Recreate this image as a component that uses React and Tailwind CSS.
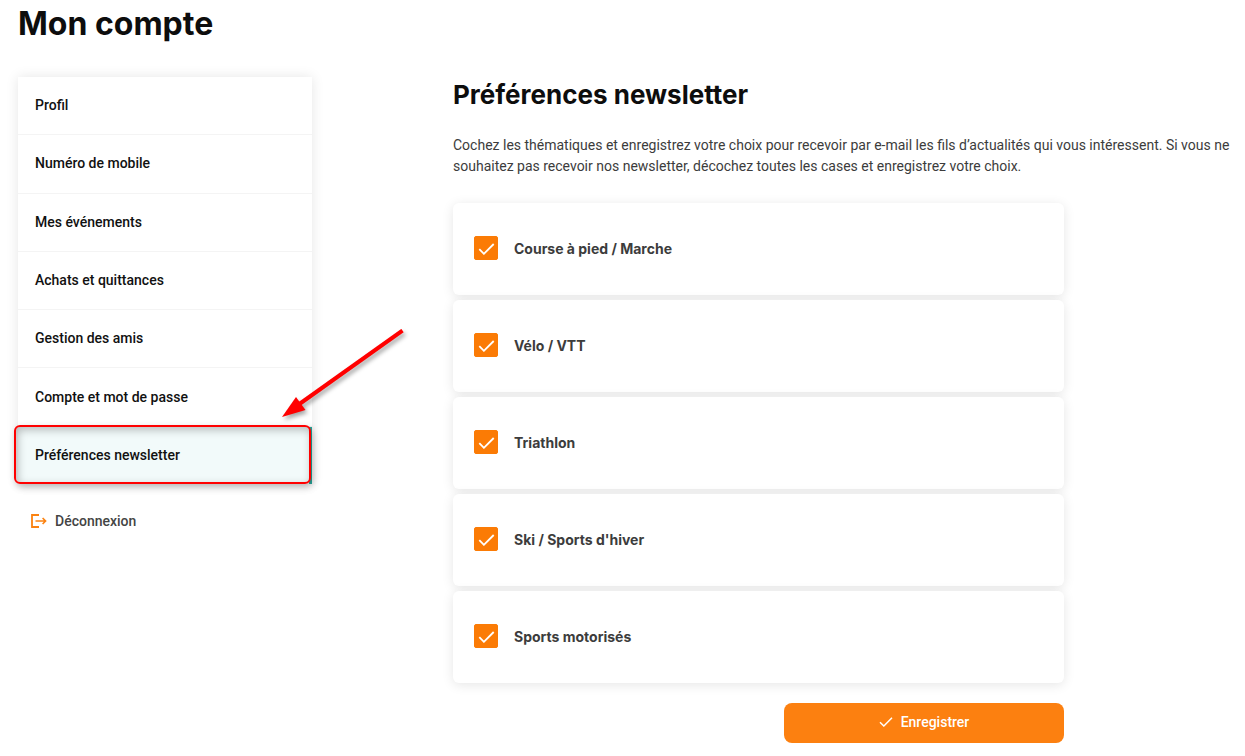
import React, { useState } from 'react';

const menuItems = [
  'Profil',
  'Numéro de mobile',
  'Mes événements',
  'Achats et quittances',
  'Gestion des amis',
  'Compte et mot de passe',
  'Préférences newsletter'
];

const topics = [
  { id: 'course', label: 'Course à pied / Marche' },
  { id: 'velo', label: 'Vélo / VTT' },
  { id: 'triathlon', label: 'Triathlon' },
  { id: 'ski', label: "Ski / Sports d'hiver" },
  { id: 'motorises', label: 'Sports motorisés' }
];

const CheckIcon = ({ className }) => (
  <svg viewBox="0 0 16 12" fill="none" stroke="currentColor" className={className} aria-hidden="true">
    <path d="M0.8 6.2 L5.4 10.8 L15.2 1" strokeWidth="1.8" />
  </svg>
);

const LogoutIcon = () => (
  <svg viewBox="0 0 16 14" fill="none" stroke="#fb8210" className="h-[14px] w-4" aria-hidden="true">
    <path d="M8 1 H1 V13 H8" strokeWidth="1.8" />
    <path d="M4.5 7 H14.5 M11.6 4 L14.6 7 L11.6 10" strokeWidth="1.6" />
  </svg>
);

/**
 * Cadre et flèche rouges posés sur l'entrée active
 */
const Highlight = () => (
  <>
    <span className="pointer-events-none absolute -top-0.5 -right-0.5 bottom-0 -left-1 rounded-md border-2 border-[#ff0000] shadow-[2px_3px_7px_rgba(0,0,0,0.25),inset_2px_3px_9px_rgba(0,0,0,0.25)]" />
    <svg
      viewBox="0 0 130 98"
      className="pointer-events-none absolute right-0 bottom-full h-[98px] w-[130px] translate-x-[101px] drop-shadow-[2px_3px_2px_rgba(0,0,0,0.35)]"
      aria-hidden="true"
    >
      <path d="M122.500 1.500 L18 76" stroke="#ff0000" strokeWidth="4" />
      <path d="M2 88 L16 68 L25.500 81 Z" fill="#ff0000" />
    </svg>
  </>
);

const Sidebar = () => (
  <aside className="w-[294px] shrink-0">
    <nav className="flex min-h-[407px] flex-col bg-white shadow-[0_0_12px_rgba(0,0,0,0.1)]">
      {menuItems.map((item, index) => {
        const active = index === menuItems.length - 1;
        return (
          <a
            key={item}
            href="#"
            aria-current={active ? 'page' : undefined}
            className={`relative flex flex-1 items-center px-[17px] pb-px text-sm font-medium text-[#111111] ${
              active ? 'border-r-3 border-[#26a69a] bg-[#f2fafa]' : 'border-b border-[#f4f4f4]'
            }`}
          >
            {item}
            {active && <Highlight />}
          </a>
        );
      })}
    </nav>

    <a href="#" className="mt-[27px] ml-[13px] inline-flex items-center gap-2 text-sm font-medium text-[#444444]">
      <LogoutIcon />
      Déconnexion
    </a>
  </aside>
);

const TopicCard = ({ topic, checked, onChange }) => (
  <label
    htmlFor={topic.id}
    className="flex cursor-pointer items-start gap-4 rounded-md bg-white px-[21px] pt-[33px] pb-[34px] shadow-[0_2px_12px_rgba(0,0,0,0.1)]"
  >
    <span className="relative flex size-6 shrink-0">
      <input
        id={topic.id}
        type="checkbox"
        checked={checked}
        onChange={onChange}
        className="peer size-6 cursor-pointer appearance-none rounded-xs border border-[#fb7b05] checked:bg-[#fb7b05]"
      />
      <CheckIcon className="pointer-events-none absolute top-[7px] left-1 hidden h-3 w-[17px] text-white peer-checked:block" />
    </span>
    <span className="pt-px font-['Inter',sans-serif] text-sm leading-6 font-bold text-[#3c3c3c]">{topic.label}</span>
  </label>
);

const App = () => {
  const [selected, setSelected] = useState(topics.map((t) => t.id));

  const toggle = (id) => {
    setSelected((prev) => (prev.includes(id) ? prev.filter((x) => x !== id) : [...prev, id]));
  };

  return (
    <div className="min-h-screen overflow-x-hidden bg-white pt-1 pr-3 pb-3 pl-[18px] font-['Roboto',sans-serif]">
      <h1 className="font-['Inter',sans-serif] text-[32px] leading-10 font-bold text-[#0d0d0d]">Mon compte</h1>

      <div className="mt-[33px] flex gap-[141px]">
        <Sidebar />

        <main className="min-w-0 flex-1">
          <h2 className="font-['Inter',sans-serif] text-[26px] leading-9 font-bold text-[#0d0d0d]">
            Préférences newsletter
          </h2>
          <p className="mt-[22px] text-sm leading-[21px] text-[#3c3c3c]">
            Cochez les thématiques et enregistrez votre choix pour recevoir par e-mail les fils d’actualités qui vous
            intéressent. Si vous ne souhaitez pas recevoir nos newsletter, décochez toutes les cases et enregistrez
            votre choix.
          </p>

          <form className="mt-[26px] max-w-[611px]" onSubmit={(e) => e.preventDefault()}>
            <div className="flex flex-col gap-[5px]">
              {topics.map((topic) => (
                <TopicCard
                  key={topic.id}
                  topic={topic}
                  checked={selected.includes(topic.id)}
                  onChange={() => toggle(topic.id)}
                />
              ))}
            </div>
            <button
              type="submit"
              className="mt-5 ml-auto flex h-10 w-[280px] cursor-pointer items-center justify-center gap-2 rounded-lg bg-[#fc8010] pb-0.5 text-sm font-medium text-white"
            >
              <CheckIcon className="h-[10px] w-[14px]" />
              Enregistrer
            </button>
          </form>
        </main>
      </div>
    </div>
  );
};

export default App;
